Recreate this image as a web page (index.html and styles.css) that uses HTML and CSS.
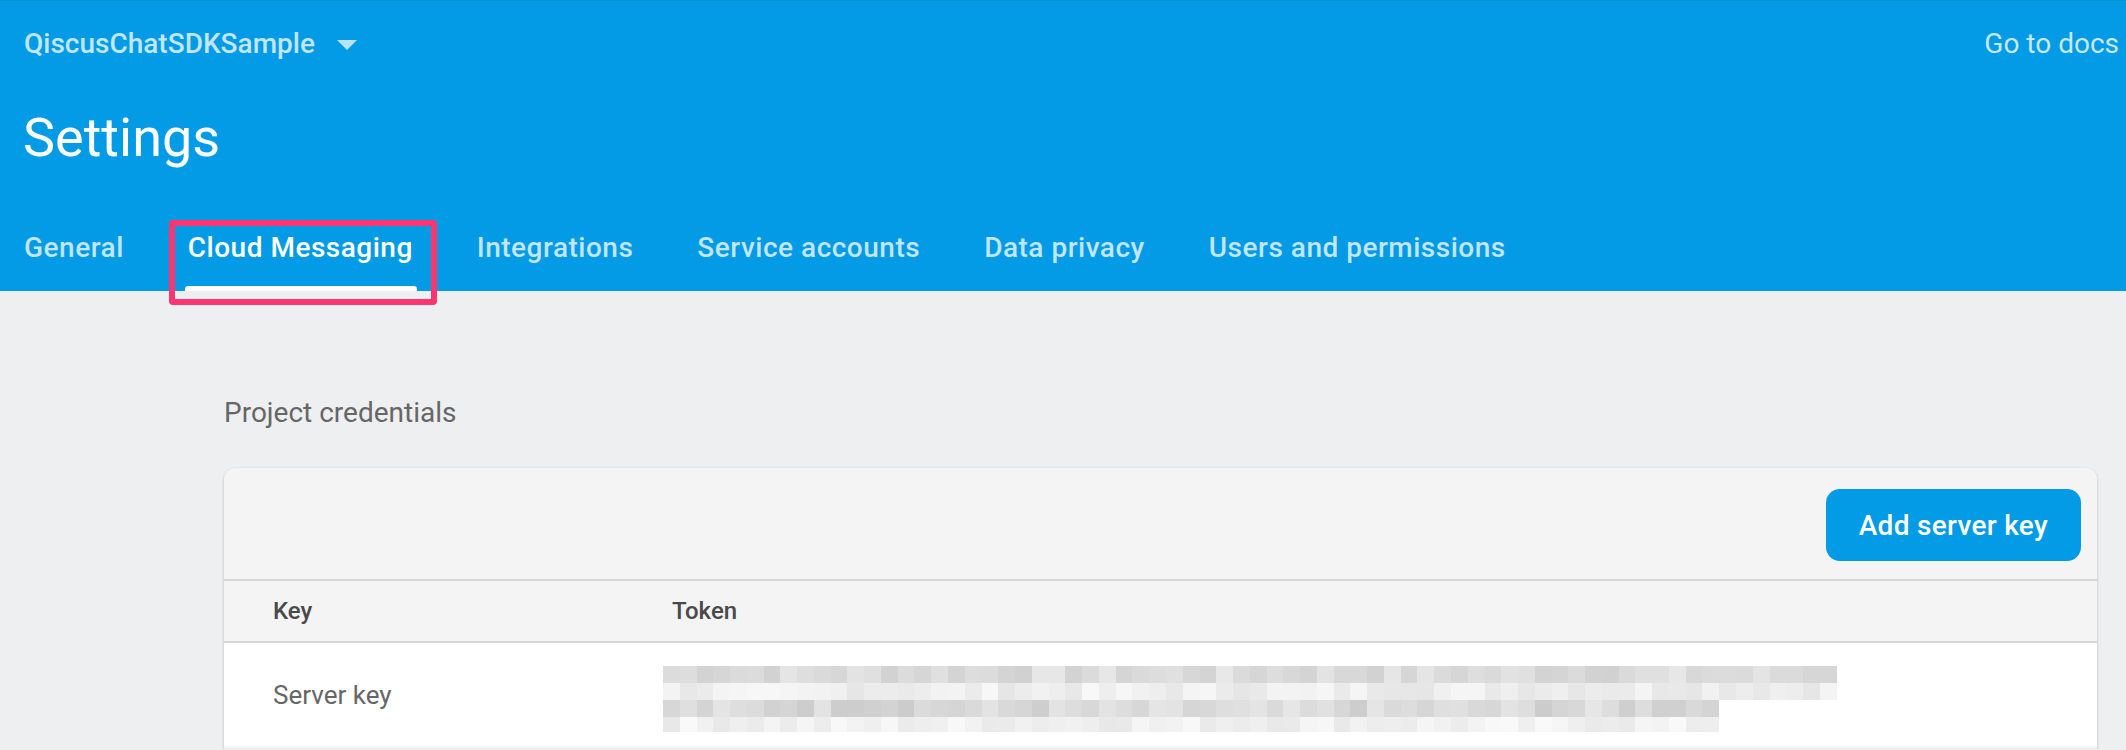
FILE: index.html
```html
<!DOCTYPE html>
<html lang="en">
<head>
  <meta charset="UTF-8" />
  <meta name="viewport" content="width=device-width, initial-scale=1" />
  <title>Settings - QiscusChatSDKSample</title>
  <link rel="stylesheet" href="styles.css">
</head>
<body>
  <header class="topbar">
    <div class="topbar-row">
      <div class="project">
        <span>QiscusChatSDKSample</span>
        <span class="caret"></span>
      </div>
      <a class="docs-link" href="#">Go to docs</a>
    </div>
    <h1 class="page-title">Settings</h1>
    <nav class="tabs">
      <a class="tab" href="#">General</a>
      <a class="tab active" href="#">Cloud Messaging</a>
      <a class="tab" href="#">Integrations</a>
      <a class="tab" href="#">Service accounts</a>
      <a class="tab" href="#">Data privacy</a>
      <a class="tab" href="#">Users and permissions</a>
    </nav>
  </header>

  <main class="content">
    <h2 class="section-title">Project credentials</h2>

    <div class="card">
      <div class="card-toolbar">
        <button class="primary-btn" type="button">Add server key</button>
      </div>
      <div class="table-row table-head">
        <div class="col-key">Key</div>
        <div class="col-token">Token</div>
      </div>
      <div class="table-row table-body">
        <div class="col-key">Server key</div>
        <div class="col-token">
          <div class="token-blur" id="tokenBlur"></div>
        </div>
      </div>
    </div>
  </main>

  <script>
    // pixelated (hidden) token, two lines of "text"
    const blur = document.getElementById('tokenBlur');
    const rows = [
      { count: 70, min: 208, max: 232, h: 17 },
      { count: 70, min: 230, max: 248, h: 17 },
      { count: 63, min: 203, max: 230, h: 17 },
      { count: 63, min: 232, max: 250, h: 15 }
    ];
    let seed = 7;
    function rand() {
      seed = (seed * 9301 + 49297) % 233280;
      return seed / 233280;
    }
    rows.forEach(r => {
      const row = document.createElement('div');
      row.className = 'blur-row';
      row.style.height = r.h + 'px';
      for (let i = 0; i < r.count; i++) {
        const cell = document.createElement('span');
        const v = Math.round(r.min + rand() * (r.max - r.min));
        cell.style.background = `rgb(${v}, ${v}, ${v})`;
        row.appendChild(cell);
      }
      blur.appendChild(row);
    });
  </script>
</body>
</html>
```

FILE: styles.css
```css
body {
  margin: 0;
  font-family: Roboto, "Noto Sans", "Liberation Sans", sans-serif;
  background-color: #eeeff1;
  color: #333;
}

a {
  text-decoration: none;
  color: inherit;
}

/* blue header */
.topbar {
  background: #039be5;
  padding: 24px 7px 0 24px;
  box-shadow: inset 0 1px 0 rgba(0, 0, 0, 0.06);
}

.topbar-row {
  display: flex;
  align-items: center;
  justify-content: space-between;
  height: 40px;
}

.project {
  display: flex;
  align-items: center;
  font-size: 28px;
  font-weight: 500;
  line-height: 40px;
  color: rgba(255, 255, 255, 0.75);
}

.caret {
  width: 0;
  height: 0;
  margin: 2px 0 0 22px;
  border-left: 10px solid transparent;
  border-right: 10px solid transparent;
  border-top: 10px solid rgba(255, 255, 255, 0.72);
}

.docs-link {
  font-size: 28px;
  line-height: 40px;
  color: rgba(255, 255, 255, 0.78);
}

.page-title {
  margin: 42px 0 0 -1px;
  font-size: 54px;
  font-weight: 400;
  line-height: 64px;
  color: #fff;
}

.tabs {
  display: flex;
  gap: 64px;
  margin-top: 58px;
}

.tab {
  position: relative;
  font-size: 28px;
  font-weight: 500;
  letter-spacing: 0.5px;
  line-height: 40px;
  padding-bottom: 23px;
  color: rgba(255, 255, 255, 0.75);
}

.tab.active {
  color: #fff;
}

.tab.active::after {
  content: "";
  position: absolute;
  left: -3px;
  right: -4px;
  bottom: 0;
  height: 5px;
  background: #fff;
  border-radius: 3px 3px 0 0;
}

/* pink highlight around the active tab */
.tab.active::before {
  content: "";
  position: absolute;
  top: -8px;
  left: -19px;
  right: -24px;
  bottom: -14px;
  border: 6px solid #fd3571;
  border-radius: 4px;
  z-index: 2;
}

/* page content */
.content {
  padding: 0 29px 0 224px;
}

.section-title {
  margin: 102px 0 35px;
  font-size: 28px;
  font-weight: 400;
  line-height: 40px;
  color: #666;
}

.card {
  background: #fff;
  border-radius: 12px 12px 0 0;
  box-shadow: 0 1px 3px rgba(0, 0, 0, 0.25);
  overflow: hidden;
}

.card-toolbar {
  display: flex;
  justify-content: flex-end;
  padding: 21px 16px 18px;
  background: #f4f4f4;
  border-bottom: 2px solid #d7d7d7;
}

.primary-btn {
  height: 72px;
  padding: 0 33px;
  border: none;
  border-radius: 14px;
  background: #039be5;
  color: #fff;
  font-family: inherit;
  font-size: 28px;
  font-weight: 500;
  letter-spacing: 0.3px;
  cursor: pointer;
}

.table-row {
  display: flex;
  padding-left: 49px;
}

.col-key {
  width: 390px;
  flex-shrink: 0;
}

.col-token {
  flex: 1;
}

.table-head {
  height: 60px;
  line-height: 60px;
  background: #f4f4f4;
  border-bottom: 2px solid #d7d7d7;
  font-size: 24px;
  font-weight: 500;
  color: #4a4a4a;
}

.table-head .col-token {
  padding-left: 9px;
}

.table-body {
  height: 104px;
  line-height: 104px;
  border-bottom: 2px solid #eeeeee;
  font-size: 26px;
  color: #666;
}

.token-blur {
  padding-top: 23px;
  line-height: 0;
}

.blur-row {
  display: flex;
}

.blur-row span {
  width: 16.77px;
  flex-shrink: 0;
}
```
